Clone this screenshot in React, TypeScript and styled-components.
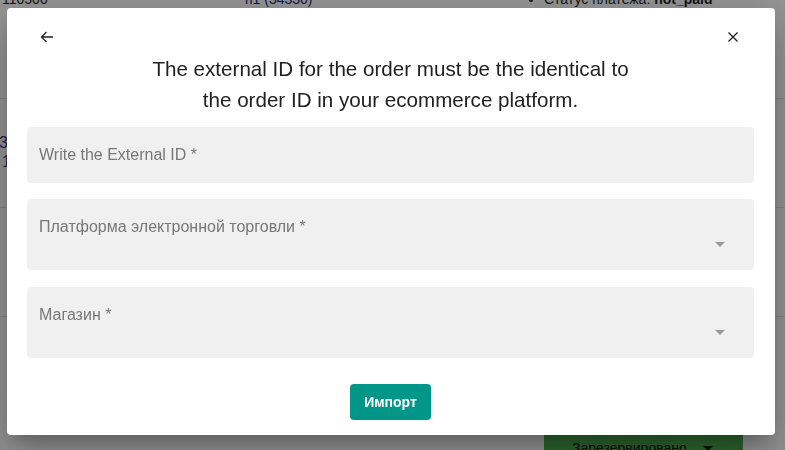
import styled, { createGlobalStyle } from "styled-components";

// the page behind the dialog is painted already dimmed by the backdrop
const GlobalStyle = createGlobalStyle`
	html, body {
		margin: 0;
		padding: 0;
		background-color: rgb(149, 149, 149);
		font-family: "Liberation Sans", Arial, sans-serif;
		overflow: hidden;
	}
`;

const Backdrop = styled.div`
	width: 785px;
	height: 450px;
	background-color: rgb(149, 149, 149);
	overflow: hidden;
	display: flex;
	flex-direction: column;
`;

const Page = styled.div`
	margin-top: -9px;
	display: flex;
	flex-direction: column;
`;

const Row = styled.div<{ h: number }>`
	height: ${(p) => p.h}px;
	border-bottom: 1px solid #838383;
	display: grid;
	grid-template-columns: 245px 285px 1fr;
	font-size: 14px;
	color: #131313;
	flex-shrink: 0;
`;

const Cell = styled.div<{ pad?: number }>`
	padding-top: ${(p) => p.pad || 0}px;
	line-height: 17px;
	white-space: nowrap;
`;

const IdCell = styled(Cell)`
	padding-left: 2px;
`;

const LinkText = styled.span`
	color: #10154a;
`;

const LeftNum = styled.div<{ shift: number }>`
	color: #2a1d55;
	font-size: 16px;
	line-height: 19px;
	margin-left: ${(p) => p.shift}px;
`;

const Bullet = styled.ul`
	margin: 0;
	padding-left: 14px;
	line-height: 17px;
	b {
		font-weight: 700;
	}
`;

const StatusRow = styled.div`
	display: flex;
	padding-left: 544px;
	padding-top: 114px;
`;

const StatusButton = styled.div`
	width: 199px;
	height: 34px;
	flex-shrink: 0;
	background-color: #2c652e;
	display: flex;
	align-items: center;
	gap: 16px;
	padding-left: 28px;
	box-sizing: border-box;
	color: #0a0a0a;
	font-size: 14px;
`;

const Caret = styled.span`
	width: 0;
	height: 0;
	border-left: 5px solid transparent;
	border-right: 5px solid transparent;
	border-top: 5px solid #0a0a0a;
`;

// dialog
const Dialog = styled.div`
	position: fixed;
	z-index: 20;
	top: 8px;
	left: 7px;
	width: 768px;
	height: 427px;
	box-sizing: border-box;
	background-color: #ffffff;
	border-radius: 4px;
	box-shadow: 0 11px 15px -7px rgba(0, 0, 0, 0.2), 0 24px 38px 3px rgba(0, 0, 0, 0.14),
		0 9px 46px 8px rgba(0, 0, 0, 0.12);
	display: flex;
	flex-direction: column;
	padding: 17px 21px 15px 20px;
`;

const Header = styled.div`
	display: flex;
	justify-content: space-between;
	align-items: center;
	height: 24px;
	padding: 0 9px 0 8px;
`;

const IconButton = styled.button`
	width: 24px;
	height: 24px;
	border: none;
	background: none;
	padding: 0;
	display: flex;
	align-items: center;
	justify-content: center;
	color: #212121;
	cursor: pointer;
`;

const Title = styled.h2`
	margin: 4px 0 0;
	text-align: center;
	font-size: 20.6px;
	font-weight: 400;
	line-height: 31px;
	color: #212121;
`;

const Form = styled.div`
	margin-top: 12px;
	display: flex;
	flex-direction: column;
	gap: 16px;
`;

const Field = styled.div<{ h: number; gapAbove?: number }>`
	height: ${(p) => p.h}px;
	margin-top: ${(p) => p.gapAbove || 0}px;
	background-color: #f0f0f0;
	border-radius: 4px;
	box-sizing: border-box;
	padding: 18px 29px 0 12px;
	display: flex;
	flex-direction: column;
`;

const Label = styled.div`
	font-size: 16px;
	line-height: 19px;
	color: #777777;
`;

const ArrowRow = styled.div`
	display: flex;
	justify-content: flex-end;
	margin-top: 6px;
`;

const DropArrow = styled.span`
	width: 0;
	height: 0;
	border-left: 5px solid transparent;
	border-right: 5px solid transparent;
	border-top: 5px solid #9a9a9a;
`;

const Actions = styled.div`
	margin-top: 26px;
	display: flex;
	justify-content: center;
`;

const PrimaryButton = styled.button`
	height: 36px;
	padding: 0 14px;
	border: none;
	border-radius: 4px;
	background-color: #009688;
	color: #ffffff;
	font-family: "Liberation Sans", Arial, sans-serif;
	font-size: 14px;
	font-weight: 700;
	cursor: pointer;
`;

export default function App() {
	return (
		<>
			<GlobalStyle />
			<Backdrop>
				<Page>
					<Row h={107}>
						<IdCell>110500</IdCell>
						<Cell>
							<LinkText>п1 (34330)</LinkText>
						</Cell>
						<Cell>
							<Bullet>
								<li>
									Статус платежа: <b>not_paid</b>
								</li>
							</Bullet>
						</Cell>
					</Row>
					<Row h={108}>
						<Cell pad={34}>
							<LeftNum shift={-10}>135</LeftNum>
							<LeftNum shift={2}>1</LeftNum>
						</Cell>
						<Cell />
						<Cell />
					</Row>
					<Row h={108}>
						<Cell />
						<Cell />
						<Cell />
					</Row>
					<StatusRow>
						<StatusButton>
							Зарезервировано
							<Caret />
						</StatusButton>
					</StatusRow>
				</Page>
			</Backdrop>
			<Dialog>
				<Header>
					<IconButton aria-label="back">
						<svg width="14" height="14" viewBox="0 0 14 14" fill="none">
							<path d="M13 7H1.5M6.5 2L1.5 7l5 5" stroke="currentColor" strokeWidth="1.3" />
						</svg>
					</IconButton>
					<IconButton aria-label="close">
						<svg width="12" height="12" viewBox="0 0 12 12" fill="none">
							<path d="M1.5 1.5l9 9M10.5 1.5l-9 9" stroke="currentColor" strokeWidth="1.3" />
						</svg>
					</IconButton>
				</Header>
				<Title>
					The external ID for the order must be the identical to
					<br />
					the order ID in your ecommerce platform.
				</Title>
				<Form>
					<Field h={56}>
						<Label>Write the External ID *</Label>
					</Field>
					<Field h={71}>
						<Label>Платформа электронной торговли *</Label>
						<ArrowRow>
							<DropArrow />
						</ArrowRow>
					</Field>
					<Field h={71} gapAbove={1}>
						<Label>Магазин *</Label>
						<ArrowRow>
							<DropArrow />
						</ArrowRow>
					</Field>
				</Form>
				<Actions>
					<PrimaryButton>Импорт</PrimaryButton>
				</Actions>
			</Dialog>
		</>
	);
}
